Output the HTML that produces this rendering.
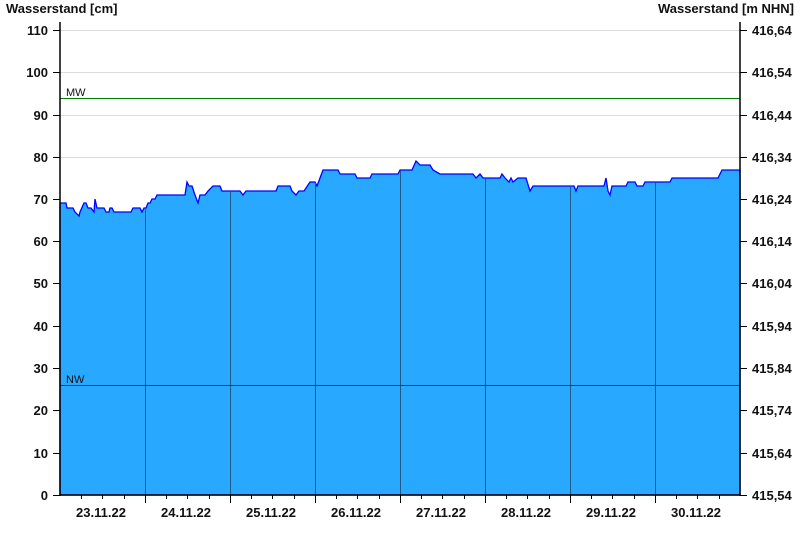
<!DOCTYPE html>
<html><head><style>
html,body{margin:0;padding:0;background:#fff;}
svg{display:block;font-family:"Liberation Sans",Arial,sans-serif;}
.b{font-weight:bold;font-size:13px;fill:#111;}
</style></head><body>
<svg width="800" height="550" viewBox="0 0 800 550" xmlns="http://www.w3.org/2000/svg">
<text x="6" y="13" class="b">Wasserstand [cm]</text>
<text x="794" y="13" class="b" text-anchor="end">Wasserstand [m NHN]</text>
<g stroke="#dcdcdc" stroke-width="1">
<line x1="60" y1="30.5" x2="740" y2="30.5"/><line x1="60" y1="72.5" x2="740" y2="72.5"/>
<line x1="60" y1="115.5" x2="740" y2="115.5"/><line x1="60" y1="157.5" x2="740" y2="157.5"/>
</g>
<line x1="60" y1="98.5" x2="740" y2="98.5" stroke="#008000"/>
<text x="66" y="96" font-size="11" fill="#111">MW</text>
<polygon fill="#29a8ff" stroke="#0000ff" stroke-width="1.3" points="60,495 60,203 66,203 67,208 73,208 75,212 79,216 80,212 84,203 86,203 88,208 91,208 94,212 95,199 97,208 104,208 106,212 109,212 110,208 112,208 114,212 131,212 133,208 140,208 142,212 144,208 146,208 148,203 150,203 152,199 155,199 157,195 185,195 187,182 189,186 192,186 195,195 198,203 200,195 205,195 208,191 213,186 220,186 222,191 240,191 243,195 246,191 276,191 278,186 290,186 292,191 296,195 299,191 304,191 310,182 315,182 317,186 320,178 323,170 338,170 340,174 355,174 357,178 370,178 372,174 398,174 400,170 412,170 416,161 420,165 430,165 433,170 440,174 473,174 476,178 480,174 483,178 500,178 502,174 505,178 509,182 511,178 513,182 518,178 526,178 530,191 533,186 574,186 576,191 578,186 604,186 606,178 608,191 610,195 612,186 626,186 628,182 635,182 637,186 643,186 645,182 670,182 672,178 718,178 722,170 740,170 740,495"/>
<g stroke="#1f5a88" stroke-width="1">
<line x1="145.5" y1="209" x2="145.5" y2="495"/><line x1="230.5" y1="192" x2="230.5" y2="495"/>
<line x1="315.5" y1="183" x2="315.5" y2="495"/><line x1="400.5" y1="171" x2="400.5" y2="495"/>
<line x1="485.5" y1="179" x2="485.5" y2="495"/><line x1="570.5" y1="187" x2="570.5" y2="495"/>
<line x1="655.5" y1="183" x2="655.5" y2="495"/>
</g>
<line x1="60" y1="385.5" x2="740" y2="385.5" stroke="#1a3a6a"/>
<text x="66" y="383" font-size="11" fill="#111">NW</text>
<g stroke="#000" stroke-width="1.5">
<line x1="60" y1="22" x2="60" y2="496"/><line x1="740" y1="22" x2="740" y2="496"/>
<line x1="60" y1="495" x2="740" y2="495"/>
</g>
<g stroke="#000" stroke-width="1">
<path d="M53,30.5h7M53,72.5h7M53,115.5h7M53,157.5h7M53,199.5h7M53,241.5h7M53,283.5h7M53,326.5h7M53,368.5h7M53,410.5h7M53,453.5h7M53,495.5h7"/>
<path d="M740,30.5h7M740,72.5h7M740,115.5h7M740,157.5h7M740,199.5h7M740,241.5h7M740,283.5h7M740,326.5h7M740,368.5h7M740,410.5h7M740,453.5h7M740,495.5h7"/>
<path d="M145.5,495v8M230.5,495v8M315.5,495v8M400.5,495v8M485.5,495v8M570.5,495v8M655.5,495v8"/>
<path d="M81.5,495v4M102.5,495v4M124.5,495v4M166.5,495v4M187.5,495v4M209.5,495v4M251.5,495v4M272.5,495v4M294.5,495v4M336.5,495v4M357.5,495v4M379.5,495v4M421.5,495v4M442.5,495v4M464.5,495v4M506.5,495v4M527.5,495v4M549.5,495v4M591.5,495v4M612.5,495v4M634.5,495v4M676.5,495v4M697.5,495v4M719.5,495v4"/>
</g>
<g class="b" text-anchor="end">
<text x="48" y="35">110</text><text x="48" y="77">100</text><text x="48" y="120">90</text><text x="48" y="162">80</text>
<text x="48" y="204">70</text><text x="48" y="246">60</text><text x="48" y="288">50</text><text x="48" y="331">40</text>
<text x="48" y="373">30</text><text x="48" y="415">20</text><text x="48" y="458">10</text><text x="48" y="500">0</text>
</g>
<g class="b">
<text x="752" y="35">416,64</text><text x="752" y="77">416,54</text><text x="752" y="120">416,44</text><text x="752" y="162">416,34</text>
<text x="752" y="204">416,24</text><text x="752" y="246">416,14</text><text x="752" y="288">416,04</text><text x="752" y="331">415,94</text>
<text x="752" y="373">415,84</text><text x="752" y="415">415,74</text><text x="752" y="458">415,64</text><text x="752" y="500">415,54</text>
</g>
<g class="b" text-anchor="middle">
<text x="101" y="517">23.11.22</text><text x="186" y="517">24.11.22</text><text x="271" y="517">25.11.22</text>
<text x="356" y="517">26.11.22</text><text x="441" y="517">27.11.22</text><text x="526" y="517">28.11.22</text>
<text x="611" y="517">29.11.22</text><text x="696" y="517">30.11.22</text>
</g>
</svg>
</body></html>
